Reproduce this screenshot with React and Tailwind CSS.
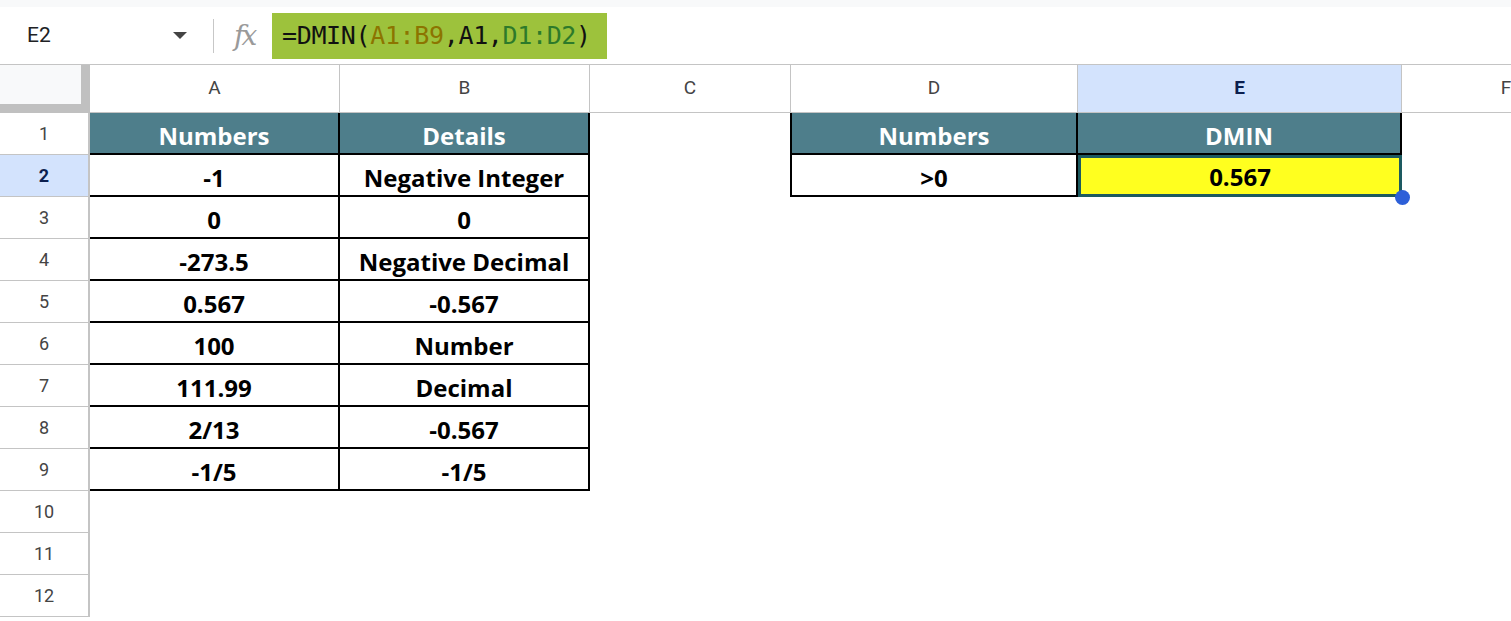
const COLS = [
  { key: "A", w: "w-[250px]" },
  { key: "B", w: "w-[250px]" },
  { key: "C", w: "w-[201px]" },
  { key: "D", w: "w-[287px]" },
  { key: "E", w: "w-[324px]" },
  { key: "F", w: "w-[209px]" },
];

const tableAB = [
  ["-1", "Negative Integer"],
  ["0", "0"],
  ["-273.5", "Negative Decimal"],
  ["0.567", "-0.567"],
  ["100", "Number"],
  ["111.99", "Decimal"],
  ["2/13", "-0.567"],
  ["-1/5", "-1/5"],
];

const cellText = "font-['Open_Sans',sans-serif] font-bold text-[24px] leading-none";

function Cell({ children, className = "" }) {
  return (
    <div className={`relative flex h-[42px] shrink-0 items-end justify-center pb-[5px] ${className}`}>
      {children}
    </div>
  );
}

function FormulaBar() {
  return (
    <div className="flex h-[58px] items-center border-b border-[#c4c4c4] bg-white">
      <div className="w-[160px] pl-[27px] font-['Roboto',sans-serif] text-[21px] text-[#202124]">E2</div>
      <svg width="16" height="10" viewBox="0 0 16 10" className="ml-[12px]">
        <path d="M1 1 L15 1 L8 8 Z" fill="#444" />
      </svg>
      <div className="ml-[25px] h-[34px] w-px bg-[#c7c7c7]" />
      <div className="ml-[20px] w-[30px] font-['DejaVu_Serif',serif] text-[28px] italic leading-none text-[#9a9a9a]">
        f<span className="-ml-[3px]">x</span>
      </div>
      <div className="ml-[8px] flex h-[46px] w-[335px] items-center bg-[#9dc23c] pl-[10px] font-['DejaVu_Sans_Mono',monospace] text-[25px] tracking-[-0.35px] text-[#111]">
        <span>=DMIN(</span>
        <span className="text-[#8c7400]">A1:B9</span>
        <span>,A1,</span>
        <span className="text-[#2d7a2a]">D1:D2</span>
        <span>)</span>
      </div>
    </div>
  );
}

function HeaderRow() {
  return (
    <div className="flex h-[48px]">
      <div className="h-[48px] w-[90px] shrink-0 border-r-[9px] border-b-[9px] border-[#c0c0c0] bg-[#f8f9fa]" />
      {COLS.map((c) => (
        <div
          key={c.key}
          className={`${c.w} flex shrink-0 items-center justify-center border-r border-b border-[#c4c4c4] font-['Roboto',sans-serif] text-[19px] ${
            c.key === "E" ? "bg-[#d3e3fd] font-bold text-[#0b1f4f]" : "bg-white text-[#444]"
          }`}
        >
          {c.key}
        </div>
      ))}
    </div>
  );
}

function RowHead({ n }) {
  const active = n === 2;
  return (
    <div
      className={`flex h-[42px] w-[90px] shrink-0 items-center justify-center border-r-2 border-b border-[#c4c4c4] font-['Roboto',sans-serif] text-[18px] ${
        active ? "bg-[#d3e3fd] font-bold text-[#0b1f4f]" : "bg-white text-[#444]"
      }`}
    >
      {n}
    </div>
  );
}

export default function App() {
  const rows = Array.from({ length: 12 }, (_, i) => i + 1);
  return (
    <div className="h-[621px] w-[1511px] overflow-hidden bg-white">
      <div className="h-[7px] bg-[#f8f9fa]" />
      <FormulaBar />
      <HeaderRow />
      {rows.map((n) => {
        const inAB = n <= 9;
        const head = n === 1;
        const data = n >= 2 && n <= 9 ? tableAB[n - 2] : null;
        return (
          <div key={n} className="flex h-[42px]">
            <RowHead n={n} />
            {/* A, B */}
            {inAB ? (
              <>
                <Cell className={`w-[250px] border-r-2 border-b-2 border-black ${head ? "bg-[#4e7e8b] text-white" : "bg-white text-black"}`}>
                  <span className={cellText}>{head ? "Numbers" : data[0]}</span>
                </Cell>
                <Cell className={`w-[250px] border-r-2 border-b-2 border-black ${head ? "bg-[#4e7e8b] text-white" : "bg-white text-black"}`}>
                  <span className={cellText}>{head ? "Details" : data[1]}</span>
                </Cell>
              </>
            ) : (
              <>
                <Cell className="w-[250px]" />
                <Cell className="w-[250px]" />
              </>
            )}
            <Cell className="w-[200px]" />
            {/* D, E */}
            {n === 1 && (
              <>
                <Cell className="w-[288px] border-l-2 border-r-2 border-b-2 border-black bg-[#4e7e8b] text-white">
                  <span className={cellText}>Numbers</span>
                </Cell>
                <Cell className="w-[324px] border-r-2 border-b-2 border-black bg-[#4e7e8b] text-white">
                  <span className={cellText}>DMIN</span>
                </Cell>
              </>
            )}
            {n === 2 && (
              <>
                <Cell className="w-[288px] border-l-2 border-r-2 border-b-2 border-black bg-white text-black">
                  <span className={cellText}>&gt;0</span>
                </Cell>
                <Cell className="w-[324px] border-[3px] border-[#1d5a60] bg-[#ffff1f] pb-[3px] text-black">
                  <span className={cellText}>0.567</span>
                  <div className="absolute -right-[11px] -bottom-[11px] h-[15px] w-[15px] rounded-full bg-[#2d5fd8]" />
                </Cell>
              </>
            )}
            {n > 2 && (
              <>
                <Cell className="w-[288px]" />
                <Cell className="w-[324px]" />
              </>
            )}
            <Cell className="w-[209px]" />
          </div>
        );
      })}
    </div>
  );
}
